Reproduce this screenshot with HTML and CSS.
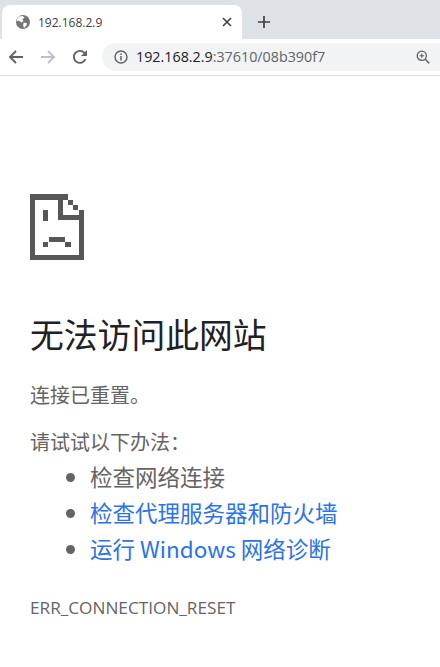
FILE: index.html
```html
<!DOCTYPE html>
<html lang="zh-CN">
<head>
  <meta charset="UTF-8" />
  <title>192.168.2.9</title>
  <meta name="viewport" content="width=device-width, initial-scale=1.0" />
  <link rel="stylesheet" href="styles.css">
</head>

<body>

<header class="tab-strip">
  <div class="tab">
    <svg class="favicon" viewBox="0 0 16 16">
      <circle cx="8" cy="8" r="7" fill="#757575" />
      <path d="M4 2.6 7.6 2 9.4 3.6 7.4 5.6 8.4 7 6.6 8.4 3.4 6.4 1.8 7.4 2 5Z" fill="#fff" />
      <path d="M8.6 8.6 12 9.2 11.4 11.6 9 14 8.2 11.2Z" fill="#fff" />
    </svg>
    <span class="tab-title">192.168.2.9</span>
    <svg class="tab-close" viewBox="0 0 10 10">
      <path d="M1 1 9 9M9 1 1 9" stroke="#3c4043" stroke-width="1.6" fill="none" />
    </svg>
  </div>
  <svg class="new-tab" viewBox="0 0 14 14">
    <path d="M7 1V13M1 7H13" stroke="#3c4043" stroke-width="1.7" fill="none" />
  </svg>
</header>

<div class="toolbar">
  <svg class="nav-icon" viewBox="0 0 16 16">
    <path d="M15 8H2M8 2 2 8 8 14" stroke="#5f6368" stroke-width="1.9" fill="none" />
  </svg>
  <svg class="nav-icon" viewBox="0 0 16 16">
    <path d="M1 8H14M8 2 14 8 8 14" stroke="#bdc1c6" stroke-width="1.9" fill="none" />
  </svg>
  <svg class="nav-icon" viewBox="0 0 16 16">
    <path d="M13.4 10.2A6 6 0 1 1 12.4 3.9L14 5.6" stroke="#5f6368" stroke-width="1.9" fill="none" />
    <path d="M15 1V7H9Z" fill="#5f6368" />
  </svg>
  <div class="omnibox">
    <svg class="info-icon" viewBox="0 0 14 14">
      <circle cx="7" cy="7" r="6" stroke="#5f6368" stroke-width="1.4" fill="none" />
      <path d="M7 6V10.4M7 3.4V5" stroke="#5f6368" stroke-width="1.5" fill="none" />
    </svg>
    <span class="url"><span class="host">192.168.2.9</span>:37610/08b390f7</span>
    <svg class="zoom-icon" viewBox="0 0 14 14">
      <circle cx="5.8" cy="5.8" r="4.6" stroke="#5f6368" stroke-width="1.3" fill="none" />
      <path d="M9.2 9.2 13.2 13.2" stroke="#5f6368" stroke-width="1.6" fill="none" />
      <path d="M5.8 3.6V8M3.6 5.8H8" stroke="#5f6368" stroke-width="1.1" fill="none" />
    </svg>
  </div>
</div>

<main class="error-page">
  <svg class="sad-file" viewBox="0 0 54 66">
    <path fill="#575757" fill-rule="evenodd" d="M0 0H38V6H43V11H48V16H54V66H0ZM5 6V61H49V26H28V6ZM33 6V21H49V16H43V11H38V6Z" />
    <path fill="#575757" d="M13 16H18V27H13ZM19 43H35V48H19ZM13 48H18V53H13ZM35 48H41V53H35Z" />
  </svg>
  <h1>无法访问此网站</h1>
  <p class="message">连接已重置。</p>
  <p class="try-label">请试试以下办法：</p>
  <ul class="suggestions">
    <li>检查网络连接</li>
    <li><a href="#">检查代理服务器和防火墙</a></li>
    <li><a href="#">运行 Windows 网络诊断</a></li>
  </ul>
  <div class="error-code">ERR_CONNECTION_RESET</div>
</main>

</body>
</html>
```

FILE: styles.css
```css
* {
  box-sizing: border-box;
  margin: 0;
  padding: 0;
}

html, body {
  height: 100%;
  background: #fff;
  overflow: hidden;
  font-family: "Open Sans", "Noto Sans CJK SC", sans-serif;
}

.tab-strip {
  display: flex;
  align-items: flex-end;
  height: 39px;
  padding-left: 2px;
  background: #dee1e6;
}

.tab {
  display: flex;
  align-items: center;
  width: 240px;
  height: 34px;
  padding: 0 10px 0 13px;
  background: #fff;
  border-radius: 8px 8px 0 0;
}

.favicon {
  width: 16px;
  height: 16px;
}

.tab-title {
  flex: 1;
  margin-left: 7px;
  font-size: 12px;
  color: #3c4043;
}

.tab-close {
  width: 10px;
  height: 10px;
}

.new-tab {
  width: 14px;
  height: 14px;
  margin: 0 0 10px 15px;
}

.toolbar {
  display: flex;
  align-items: center;
  height: 37px;
  padding: 0 0 1px 8px;
  background: #fff;
  border-bottom: 1px solid #dadce0;
}

.nav-icon {
  width: 16px;
  height: 16px;
  margin-right: 16px;
}

.omnibox {
  display: flex;
  align-items: center;
  flex: 1;
  height: 28px;
  margin-left: -2px;
  padding: 0 10px 0 12px;
  background: #f1f3f4;
  border-radius: 14px 0 0 14px;
}

.info-icon {
  width: 14px;
  height: 14px;
}

.url {
  flex: 1;
  margin-left: 8px;
  font-size: 14.3px;
  color: #5f6368;
}

.host {
  color: #202124;
}

.zoom-icon {
  width: 14px;
  height: 14px;
}

.error-page {
  padding: 118px 30px 0;
  font-family: "Noto Sans CJK SC", "Open Sans", sans-serif;
  color: #646464;
}

.sad-file {
  display: block;
  width: 54px;
  height: 66px;
}

h1 {
  margin-top: 50px;
  font-size: 33.8px;
  line-height: 48px;
  font-weight: 400;
  color: #202124;
}

.message {
  margin-top: 22px;
  font-size: 20px;
  line-height: 30px;
}

.try-label {
  margin-top: 17px;
  font-size: 20px;
  line-height: 30px;
}

.suggestions {
  margin-top: 1px;
  padding-left: 60px;
  font-size: 22.5px;
  line-height: 36px;
}

.suggestions a {
  color: #2a72e8;
  text-decoration: none;
}

.error-code {
  margin-top: 30px;
  font-family: "Open Sans", sans-serif;
  font-size: 17.2px;
  line-height: 24px;
}
```
